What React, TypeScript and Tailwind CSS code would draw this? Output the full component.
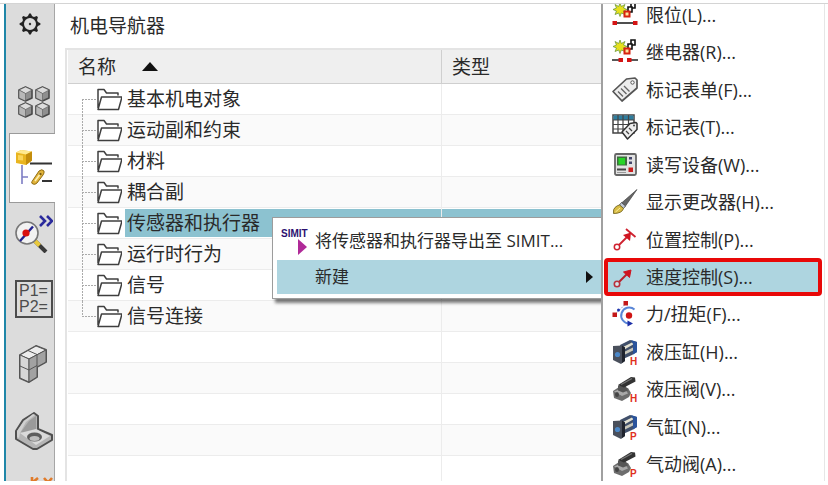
import type { ReactNode } from "react";
import clsx from "clsx";

const treeItems = [
  "基本机电对象",
  "运动副和约束",
  "材料",
  "耦合副",
  "传感器和执行器",
  "运行时行为",
  "信号",
  "信号连接",
];
const selectedItem = "传感器和执行器";
const emptyRows = 5;

/* ---------- sidebar icons ---------- */

function GearIcon() {
  return (
    <svg viewBox="0 0 22 22" className="mr-2 h-[22px] w-[22px]">
      <g fill="#222">
        {[0, 45, 90, 135, 180, 225, 270, 315].map((a) => (
          <path key={a} d="M8.200 4.500 10.200.6h1.600l2 3.900z" transform={`rotate(${a} 11 11)`} />
        ))}
      </g>
      <circle cx="11" cy="11" r="7" fill="#dcdcdc" stroke="#222" strokeWidth="2" />
      <circle cx="11" cy="11" r="1.2" fill="#333" />
    </svg>
  );
}

function MiniCube({ x, y }: { x: number; y: number }) {
  return (
    <g transform={`translate(${x} ${y})`} stroke="#4a4a4a" strokeLinejoin="round">
      <path d="M7.5 1 14 4v8l-6.500 3L1 12V4z" fill="#8f8f8f" strokeWidth="1.600" />
      <path d="M7.500 1 14 4 7.500 7.500 1 4z" fill="#dcdcdc" strokeWidth=".5" />
      <path d="M1 4l6.500 3.500V15L1 12z" fill="#b8b8b8" strokeWidth=".5" />
    </g>
  );
}

function CubesIcon() {
  return (
    <svg viewBox="0 0 34 32" className="h-8 w-[34px]">
      <MiniCube x={1} y={0} />
      <MiniCube x={18} y={0} />
      <MiniCube x={1} y={16} />
      <MiniCube x={18} y={16} />
    </svg>
  );
}

function NavigatorIcon() {
  return (
    <svg viewBox="0 0 38 38" className="h-[38px] w-[38px]">
      <path d="M7 16v19M7 28h6" stroke="#7d7dc4" strokeWidth="1.600" fill="none" />
      <path d="M15 14.500h22M27 32h10" stroke="#333" strokeWidth="1.800" />
      <path d="M1 3.500 6 1l11 1.500v9L11 16 1 14z" fill="#e9b520" />
      <path d="M1 3.500 6 1l11 1.500-6 3z" fill="#ffe98f" />
      <path d="M11 5.500l6-3v9L11 16z" fill="#c48d0c" />
      <path d="M3 6l5 .6v5L3 11z" fill="#fbd55a" />
      <path d="M17 32.500 24 22q3-2.500 5 0 .5 2-1 4l-6 8q-2 2-4 1-2-.5-1-2.500z" fill="#e3b53a" stroke="#8f6c14" />
      <path d="M20 32l6-8" stroke="#fff0b0" strokeWidth="1.500" />
      <circle cx="25.500" cy="25" r="1.200" fill="#7a5c10" />
    </svg>
  );
}

function InspectIcon() {
  return (
    <svg viewBox="0 0 38 38" className="h-[38px] w-[38px]">
      <path d="M19 25l12 12" stroke="#3a3a3a" strokeWidth="4" />
      <path d="M19.500 25.500l5 5" stroke="#e9c93c" strokeWidth="4" />
      <circle cx="12" cy="18" r="11" fill="#f2f2f2" stroke="#777" strokeWidth="1.600" />
      <path d="M5 26 18 11.500" stroke="#23238f" strokeWidth="2.400" />
      <circle cx="11" cy="18" r="3.600" fill="#d90f0f" />
      <path d="M25 1l5 5-5 5M32 1l5 5-5 5" fill="none" stroke="#2a2a9c" strokeWidth="2.600" />
    </svg>
  );
}

function ParamsIcon() {
  return (
    <span className="flex h-[38px] w-[38px] flex-col items-center justify-center border-2 border-[#4c4c4c] text-base leading-4 text-[#4c4c4c]">
      <span>P1=</span>
      <span>P2=</span>
    </span>
  );
}

function BlocksIcon() {
  return (
    <svg viewBox="0 0 38 38" className="h-[38px] w-[38px]">
      <g strokeLinejoin="round" stroke="#555">
        <path d="M5 10 21 1l10 4v12l-9 5v10l-8 5-9-4z" fill="#bdbdbd" strokeWidth="2" />
        <path d="M5 10 21 1l10 4-17 9z" fill="#ececec" />
        <path d="M5 10l9 4v23l-9-4z" fill="#d6d6d6" />
        <path d="M14 14l17-9v12l-9 5v10l-8 5z" fill="#a2a2a2" />
        <path d="M13 5.500l9 4V22M5 21l9 4 8-4.500" fill="none" />
      </g>
    </svg>
  );
}

function BracketIcon() {
  return (
    <svg viewBox="0 0 38 38" className="h-[38px] w-[38px]">
      <g strokeLinejoin="round">
        <path d="M1 19 8 8 19 1l4 3v13l14 6v5L22 37h-4L1 27z" fill="#b5b5b5" stroke="#505050" strokeWidth="2" />
        <path d="M6 20l8-11 7-5v13l-9 6z" fill="#9b9b9b" />
        <path d="M5 21 21 17l14 7-14 9z" fill="#dadada" />
        <path d="M2 19 9 9l9-7 2 1-9 7-6 11-1 5-2-1z" fill="#d0d0d0" />
        <ellipse cx="19.500" cy="25" rx="7.500" ry="4.500" fill="#5c5c5c" />
        <ellipse cx="19.500" cy="26.500" rx="5" ry="2.500" fill="#bdbdbd" />
      </g>
    </svg>
  );
}

function AxesIcon() {
  return (
    <svg viewBox="0 0 38 20" className="h-5 w-[38px]">
      <path d="M17 0v12M23 1l-5 4 6 6M29 1l8 9M37 1l-8 9" fill="none" stroke="#e07b2a" strokeWidth="2.600" />
    </svg>
  );
}

const tabs: { label: string; icon: ReactNode; box: string; active?: boolean }[] = [
  { label: "设置", icon: <GearIcon />, box: "h-[67px] pb-[27px]" },
  { label: "装配导航器", icon: <CubesIcon />, box: "h-[62px]" },
  { label: "机电导航器", icon: <NavigatorIcon />, box: "h-[70px]", active: true },
  { label: "运行时察看器", icon: <InspectIcon />, box: "h-[62px]" },
  { label: "表达式", icon: <ParamsIcon />, box: "h-[68px]" },
  { label: "部件", icon: <BlocksIcon />, box: "h-[62px]" },
  { label: "重用库", icon: <BracketIcon />, box: "h-[72px]" },
  { label: "坐标系", icon: <AxesIcon />, box: "h-10" },
];

/* ---------- menu icons ---------- */

function MenuSvg({ children }: { children: ReactNode }) {
  return (
    <svg viewBox="0 0 26 26" className="h-[26px] w-[26px] shrink-0 overflow-visible">
      {children}
    </svg>
  );
}

function Burst() {
  return (
    <>
      <path
        d="M8 1l1.300 3.500L13 2.500 11.500 6l3.500 1.500-3.500 1.500 1.500 3.500-3.700-1.500L8 14.500 6.700 11 3 12.500 4.500 9 1 7.500 4.500 6 3 2.500l3.700 2z"
        fill="#e6e01c"
        stroke="#6f9a3c"
        strokeWidth=".8"
      />
      <path d="M19 1h4v5h-4z" fill="#fff" stroke="#111" strokeWidth="1.600" />
      <path d="M16 5h4v5h-4z" fill="#fff" stroke="#111" strokeWidth="1.600" />
      <path d="M12.500 9.500h5v5h-5z" fill="#ffe7a0" stroke="#d8230f" strokeWidth="2" />
    </>
  );
}

function LimitIcon() {
  return (
    <MenuSvg>
      <Burst />
      <path d="M3 21h20" stroke="#222" strokeWidth="1.600" />
      <path d="M.5 19H5v4H.5zM21 19h4.500v4H21z" fill="#d41414" />
    </MenuSvg>
  );
}

function RelayIcon() {
  return (
    <MenuSvg>
      <Burst />
      <path d="M0 21h7M18 21h8" stroke="#222" strokeWidth="1.600" />
      <path d="M6.500 19H11v4H6.500zM15 19h4.500v4H15z" fill="#d41414" />
    </MenuSvg>
  );
}

function TagIcon() {
  return (
    <MenuSvg>
      <path d="M1 14.500 14.500 2 23 1l2 2v8L10 24z" fill="#ededed" stroke="#555" strokeWidth="1.700" strokeLinejoin="round" />
      <circle cx="20.500" cy="5.500" r="1.700" fill="#fff" stroke="#555" />
      <path d="M6 14.500l5 5M9 11.500l5.500 5.500M12 9l5.500 5.500" stroke="#666" strokeWidth="1.400" />
    </MenuSvg>
  );
}

function TagTableIcon() {
  return (
    <MenuSvg>
      <path d="M1 1h21v18H1z" fill="#fff" stroke="#444" strokeWidth="1.500" />
      <path d="M1.500 1.500h20V6h-20z" fill="#2e7d9e" />
      <path d="M1 6h21M1 10.500h21M1 15h21M6 1v18M11 1v18M16.500 1v18" stroke="#444" strokeWidth="1.200" />
      <path d="M10 18l8-8.500 6-1 1 1v6L15.500 25z" fill="#eee" stroke="#333" strokeWidth="1.500" strokeLinejoin="round" />
      <path d="M14 17l3 3M17 14l3 3" stroke="#444" strokeWidth="1.300" />
      <circle cx="22" cy="11.500" r="1" fill="#444" />
    </MenuSvg>
  );
}

function DeviceIcon() {
  return (
    <MenuSvg>
      <rect x="3" y="2" width="21" height="21" rx="1.500" fill="#e2e2e2" stroke="#666" strokeWidth="1.800" />
      <path d="M5 4.500h10v9H5z" fill="#3d6e3d" />
      <path d="M6.500 6H13v6.500H6.500z" fill="#27d427" />
      <path d="M17 5h3v2.500h-3zM17 9.500h3V12h-3z" fill="#44466b" />
      <path d="M5 17.500h9" stroke="#444" strokeWidth="2" />
      <path d="M5 20.500h9" stroke="#999" />
      <path d="M16.500 15.500H21V20h-4.500z" fill="#c92020" />
    </MenuSvg>
  );
}

function BrushIcon() {
  return (
    <MenuSvg>
      <path d="M25 .5 13.500 17 9.500 14z" fill="#666" stroke="#333" strokeWidth=".6" />
      <path d="M9.500 13.500l4 3.500-2 2.500-4-3.500z" fill="#bfc7d4" stroke="#444" strokeWidth=".8" />
      <path d="M7.500 16l4 3.500Q10 24.500 1.500 24.500 1 20 3 18.500q2-2 4.500-2.500z" fill="#d9bd45" stroke="#75651f" strokeWidth=".9" />
      <path d="M3.500 23 8 19" stroke="#fbeea0" />
    </MenuSvg>
  );
}

function PositionIcon() {
  return (
    <MenuSvg>
      <path d="M7 18l8-8M14 2l9.500 8" stroke="#cf2230" strokeWidth="1.800" />
      <path d="M11 8 19 5.500 18 14z" fill="#cf1420" />
      <circle cx="5" cy="20" r="2.700" fill="#fff" stroke="#cf2230" strokeWidth="1.500" />
    </MenuSvg>
  );
}

function SpeedIcon() {
  return (
    <MenuSvg>
      <path d="M7 18l8-8" stroke="#b8202c" strokeWidth="2" />
      <path d="M11.500 8 19 6l-1.500 7.500z" fill="#cf1420" stroke="#cf1420" />
      <circle cx="5" cy="20" r="2.700" fill="#d3e4ea" stroke="#b8303c" strokeWidth="1.600" />
    </MenuSvg>
  );
}

function ForceIcon() {
  return (
    <MenuSvg>
      <path d="M3 13.500 13.500 3" stroke="#8fa6dc" strokeDasharray="2 1" />
      <path d="M22.500 8.500a8 8 0 1 0-5 14" fill="none" stroke="#5a86d6" strokeWidth="2" />
      <path d="M15.500 19.500l5.500 3-5.500 3z" fill="#1c2fa8" />
      <path d="M11.500 0H16v4.500h-4.500zM.5 11.500H5V16H.5z" fill="#c41818" />
      <circle cx="6.500" cy="9" r="1.500" fill="#2136ad" />
      <circle cx="17" cy="14.500" r="3.200" fill="#cf1414" />
    </MenuSvg>
  );
}

function Mark({ letter }: { letter: string }) {
  return (
    <text x="18" y="26" className="fill-[#e0301e] font-['Liberation_Sans',sans-serif] text-[10px] font-bold">
      {letter}
    </text>
  );
}

function CylinderIcon({ letter }: { letter: string }) {
  return (
    <MenuSvg>
      <path d="M8 6 18 1l7 2v10l-5 3-9 4z" fill="#41506b" />
      <path d="M10 8.500 20 3.500l2 1.500-10.500 6z" fill="#e3e1d2" />
      <path d="M12 13l9-4.500v3L12 16z" fill="#c9c7ba" />
      <path d="M19 1l6 2v10l-4 2.500V5z" fill="#2b549c" />
      <path d="M1 7l9-.5 3 2V22l-4 3-8-4z" fill="#4a505c" />
      <path d="M10 6.500l3 2V22l-3 2z" fill="#20242e" />
      <circle cx="5.500" cy="15.500" r="2.600" fill="#4b87c7" />
      <Mark letter={letter} />
    </MenuSvg>
  );
}

function ValveIcon({ letter }: { letter: string }) {
  return (
    <MenuSvg>
      <path d="M1 15l6-4 9 1 3 5-2 4-7 4-8-3z" fill="#6d6d6d" />
      <path d="M2 15.500l6-2.500 6 1.500 2 3-6 2.500z" fill="#a8a8a8" />
      <path d="M6 9.500l7-1 3 6-5 2-5-2z" fill="#555" />
      <path d="M6 9 19 1l4 .5.500 4L12 11.500z" fill="#333" />
      <path d="M9 8.500 20 2.500" stroke="#777" strokeWidth="1.300" />
      <ellipse cx="5" cy="18.500" rx="2" ry="2.500" fill="#444" />
      <Mark letter={letter} />
    </MenuSvg>
  );
}

const submenu: { label: string; icon: ReactNode; marked?: boolean }[] = [
  { label: "限位(L)...", icon: <LimitIcon /> },
  { label: "继电器(R)...", icon: <RelayIcon /> },
  { label: "标记表单(F)...", icon: <TagIcon /> },
  { label: "标记表(T)...", icon: <TagTableIcon /> },
  { label: "读写设备(W)...", icon: <DeviceIcon /> },
  { label: "显示更改器(H)...", icon: <BrushIcon /> },
  { label: "位置控制(P)...", icon: <PositionIcon /> },
  { label: "速度控制(S)...", icon: <SpeedIcon />, marked: true },
  { label: "力/扭矩(F)...", icon: <ForceIcon /> },
  { label: "液压缸(H)...", icon: <CylinderIcon letter="H" /> },
  { label: "液压阀(V)...", icon: <ValveIcon letter="H" /> },
  { label: "气缸(N)...", icon: <CylinderIcon letter="P" /> },
  { label: "气动阀(A)...", icon: <ValveIcon letter="P" /> },
];

/* ---------- layout ---------- */

function Sidebar() {
  return (
    <nav className="flex w-[51px] shrink-0 flex-col overflow-hidden border-l-2 border-[#1f86a8] bg-[#dcdcdc] pl-[3px]">
      {tabs.map((t) => (
        <button
          key={t.label}
          type="button"
          aria-label={t.label}
          className={clsx(
            "flex shrink-0 items-center justify-center pl-[3px] font-['Liberation_Sans',sans-serif]",
            t.box,
            t.active ? "border-y border-l border-[#9a9a9a] bg-white" : "shadow-[inset_-1px_0_0_#a6a6a6]"
          )}
        >
          {t.icon}
        </button>
      ))}
    </nav>
  );
}

function TreeBranch({ first, last }: { first: boolean; last: boolean }) {
  return (
    <svg viewBox="0 0 44 31" className="h-[31px] w-11 shrink-0">
      <path d={`M4.500 ${first ? 15 : 0}V${last ? 15 : 31}`} stroke="#aaa" strokeDasharray="2 1" />
      <path d="M4 15.500h15" stroke="#aaa" strokeDasharray="2 1" />
      <path
        d="M20 24V5.500h6l2.500 3.500H40v2.500M20 25.500l3.500-12.500H44l-3.500 12.500z"
        fill="#fff"
        stroke="#3f3f3f"
        strokeWidth="1.500"
        strokeLinejoin="round"
      />
    </svg>
  );
}

function Navigator() {
  return (
    <main className="flex min-w-0 flex-1 flex-col overflow-hidden bg-white pl-2.5">
      <h1 className="pt-2 pl-[5px] text-[19px] leading-7">机电导航器</h1>
      <div className="mt-2 flex-1 overflow-hidden border-t-2 border-l-2 border-[#e4e4e4] pl-px">
        <table className="w-full table-fixed border-separate border-spacing-0 text-left text-[19px] leading-7">
          <thead>
            <tr className="bg-[#efefef]">
              <th scope="col" className="h-[34px] w-[374px] border-r border-b border-[#cfcfcf] p-0 pl-2.5 font-normal">
                <button type="button" className="flex items-center gap-[26px]">
                  名称
                  <svg viewBox="0 0 16 9" className="h-[9px] w-4">
                    <path d="M0 9 8 0l8 9z" fill="#111" />
                  </svg>
                </button>
              </th>
              <th scope="col" className="border-b border-[#cfcfcf] p-0 pl-2.5 font-normal">
                类型
              </th>
            </tr>
          </thead>
          <tbody>
            {treeItems.map((name, i) => {
              const selected = name === selectedItem;
              return (
                <tr key={name} className="even:bg-[#fafafa]">
                  <td className="border-r border-b border-[#ececec] p-0">
                    <div className="flex h-[30px] items-center pl-2.5">
                      <TreeBranch first={i === 0} last={i === treeItems.length - 1} />
                      <span className={clsx("ml-[3px] flex-1 pl-0.5", selected && "bg-[#8cc2d0]")}>{name}</span>
                    </div>
                  </td>
                  <td className="border-b border-[#ececec] p-0">
                    <div className={clsx("h-7", selected && "bg-[#8cc2d0]")} />
                  </td>
                </tr>
              );
            })}
            {Array.from({ length: emptyRows }, (_, i) => (
              <tr key={i} className="even:bg-[#fafafa]">
                <td className="h-[31px] border-r border-b border-[#ececec] p-0" />
                <td className="border-b border-[#ececec] p-0" />
              </tr>
            ))}
          </tbody>
        </table>
      </div>
    </main>
  );
}

function ContextMenu() {
  return (
    <div
      role="menu"
      className="absolute top-[213px] right-[222px] left-[272px] border border-[#9c9c9c] bg-white p-1 text-[17px] leading-6 shadow-[3px_4px_3px_#00000080]"
    >
      <button type="button" role="menuitem" className="flex h-[38px] w-full items-center gap-2 pl-1 whitespace-nowrap">
        <svg viewBox="0 0 26 28" className="h-7 w-[26px] shrink-0 overflow-visible">
          <text x="0" y="10" className="fill-[#2b1070] font-['Liberation_Sans',sans-serif] text-[10px] font-bold">
            SIMIT
          </text>
          <path d="M17 12l9 8-9 8z" fill="#b02a98" />
        </svg>
        将传感器和执行器导出至 SIMIT...
      </button>
      <button type="button" role="menuitem" className="flex h-[34px] w-full items-center bg-[#aed5e0] pr-2 pl-[38px]">
        新建
        <svg viewBox="0 0 7 12" className="ml-auto h-3 w-[7px]">
          <path d="M0 0l7 6-7 6z" fill="#111" />
        </svg>
      </button>
    </div>
  );
}

function SubMenu() {
  return (
    <div className="absolute -top-2 right-0 -bottom-0.5 flex w-[227px] bg-white pr-[3px]">
      <div
        role="menu"
        className="flex flex-1 flex-col border-r border-l-2 border-r-[#e6e6e6] border-l-[#a0a0a0] pr-0.5 pl-px text-lg leading-6"
      >
        {submenu.map((m) => (
          <button
            key={m.label}
            type="button"
            role="menuitem"
            className={clsx(
              "flex min-h-0 flex-1 items-center gap-2 rounded-sm border-4 pl-1 whitespace-nowrap",
              m.marked ? "border-[#e80808] bg-[#aed5e0]" : "border-transparent"
            )}
          >
            {m.icon}
            {m.label}
          </button>
        ))}
      </div>
    </div>
  );
}

export default function App() {
  return (
    <div className="h-screen bg-white pt-[3px] pb-1 font-['Open_Sans','Noto_Sans_CJK_SC',sans-serif] text-[#2a2a2a]">
      <div className="relative flex h-full overflow-hidden border-t border-[#d4d4d4] pl-1">
        <Sidebar />
        <Navigator />
        <ContextMenu />
        <SubMenu />
      </div>
    </div>
  );
}
